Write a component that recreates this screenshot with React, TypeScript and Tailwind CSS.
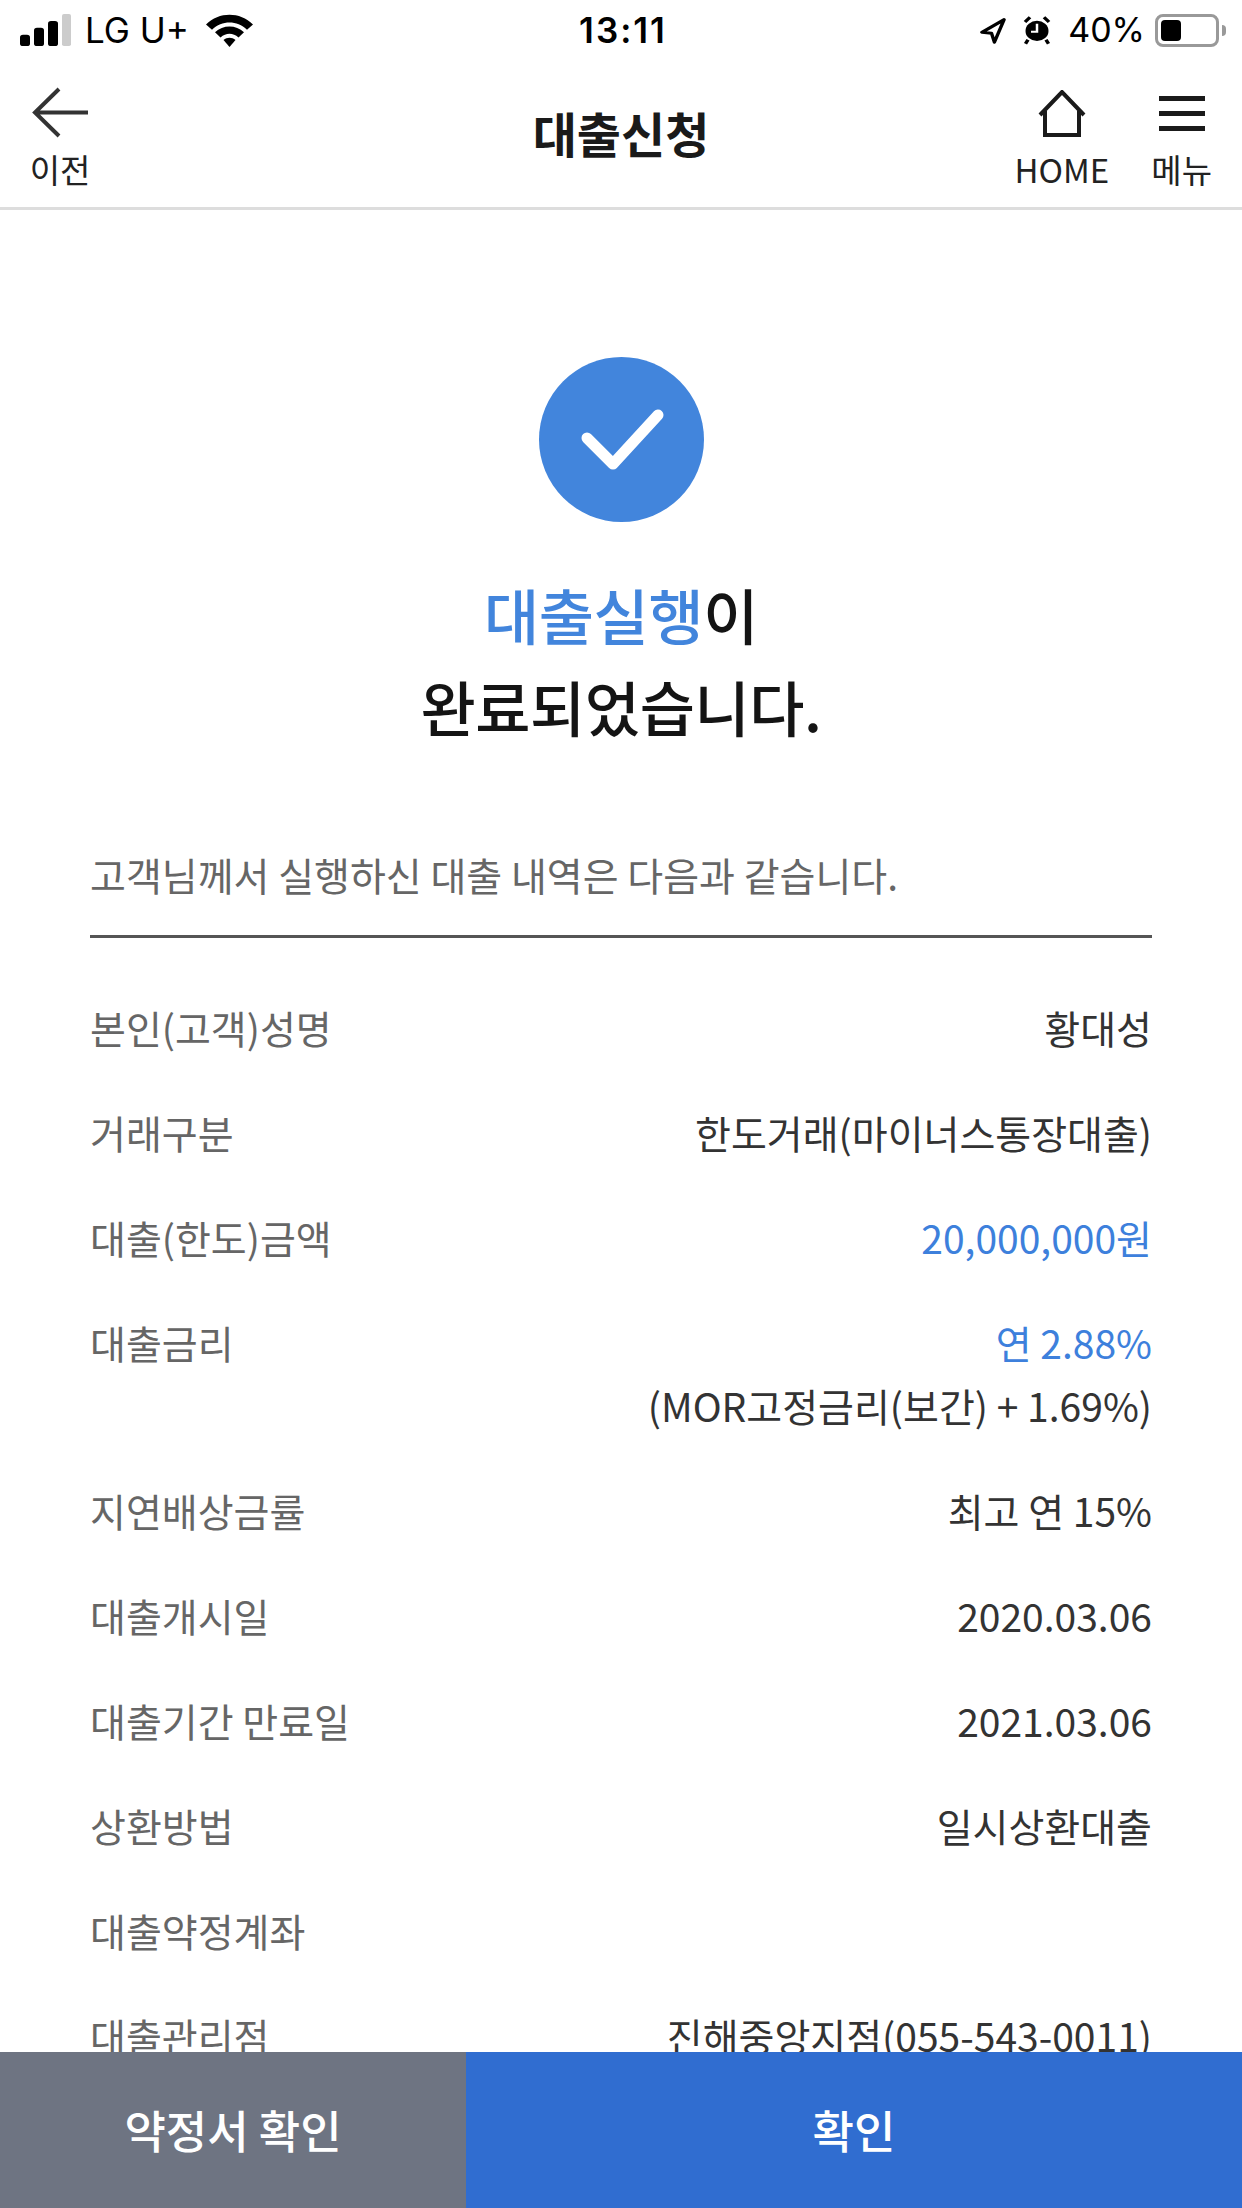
const KR = 'font-["Noto_Sans_CJK_KR",sans-serif]';

const rows = [
  { label: '본인(고객)성명', value: '황대성' },
  { label: '거래구분', value: '한도거래(마이너스통장대출)' },
  { label: '대출(한도)금액', value: '20,000,000원', blue: true },
  { label: '대출금리', value: '연 2.88%', blue: true, sub: '(MOR고정금리(보간) + 1.69%)' },
  { label: '지연배상금률', value: '최고 연 15%' },
  { label: '대출개시일', value: '2020.03.06' },
  { label: '대출기간 만료일', value: '2021.03.06' },
  { label: '상환방법', value: '일시상환대출' },
  { label: '대출약정계좌', value: '' },
  { label: '대출관리점', value: '진해중앙지점(055-543-0011)' },
];

const StatusBar = () => (
  <div className='flex h-[60px] shrink-0 items-center pl-[20px] pr-[16px] font-["Inter",sans-serif] text-[35px] text-black'>
    <div className="flex w-[400px] items-center">
      <svg width="51" height="32" viewBox="0 0 51 37" preserveAspectRatio="none" className="mr-[14px]">
        <rect x="0" y="24" width="10" height="13" rx="3" fill="#000" />
        <rect x="14" y="16" width="10" height="21" rx="3" fill="#000" />
        <rect x="28" y="8" width="10" height="29" rx="3" fill="#000" />
        <rect x="42" y="0" width="9" height="37" rx="2" fill="#ccc" />
      </svg>
      <span className="leading-none">LG U+</span>
      <svg width="47" height="33" viewBox="0 0 47 38" preserveAspectRatio="none" className="ml-[17px]">
        <path d="M0 12 C13 -3 34 -3 47 12 L41 18 C31 7 16 7 6 18 Z" fill="#000" />
        <path d="M9 21 C17 12 30 12 38 21 L32.500 27 C27 21.500 20 21.500 14.500 27 Z" fill="#000" />
        <path d="M17.500 30 C21 26.500 26 26.500 29.500 30 L23.500 38 Z" fill="#000" />
      </svg>
    </div>
    <span className="flex-1 text-center text-[35px] leading-none font-semibold tracking-[2px]">13:11</span>
    <div className="flex w-[400px] items-center justify-end text-[34px]">
      <svg width="27" height="27" viewBox="0 0 28 30" preserveAspectRatio="none" className="mr-[17px]">
        <path d="M26 3 L3 17 L13 18 L16 28 Z" fill="none" stroke="#000" strokeWidth="3.500" strokeLinejoin="round" />
      </svg>
      <svg width="28" height="30" viewBox="0 0 28 34" preserveAspectRatio="none" className="mr-[17px]">
        <circle cx="14" cy="18" r="11.500" fill="#000" />
        <path d="M14 10 V19 H8" fill="none" stroke="#fff" strokeWidth="2.500" />
        <path d="M2 8 L7 2.500 M26 8 L21 2.500 M5 28 L2.500 32.500 M23 28 L25.500 32.500" stroke="#000" strokeWidth="3.500" />
      </svg>
      <span className="leading-none">40%</span>
      <div className="ml-[10px] flex h-[33px] w-[64px] items-center rounded-[8px] border-[3px] border-[#999] p-[3px]">
        <div className="h-[21px] w-[20px] rounded-[4px] bg-black" />
      </div>
      <div className="ml-[3px] h-[11px] w-[4px] rounded-r-full bg-[#999]" />
    </div>
  </div>
);

const Header = () => (
  <div className={`flex h-[150px] shrink-0 items-start border-b-[3px] border-[#dddddd] ${KR}`}>
    <div className="flex w-[400px] flex-col items-start">
      <div className="flex w-[120px] flex-col items-center pt-[27px]">
        <svg width="58" height="52" viewBox="0 0 58 52">
          <path d="M57 25.500 H4 M28 2 L4 25.500 L28 49" fill="none" stroke="#333" strokeWidth="4" />
        </svg>
        <span className="mt-[9px] text-[33px] leading-[42px] text-[#222]">이전</span>
      </div>
    </div>
    <div className="flex-1 pt-[39px] text-center text-[48px] leading-[66px] font-bold text-[#1a1a1a]">대출신청</div>
    <div className="flex w-[400px] items-start justify-end pr-[30px]">
      <div className="flex flex-col items-center pt-[30px]">
        <svg width="48" height="50" viewBox="0 0 48 50">
          <path d="M2 25 L24 2 L46 25 M7 21 V45 H41 V21" fill="none" stroke="#1a1a1a" strokeWidth="4" />
        </svg>
        <span className="mt-[8px] text-[33px] leading-[42px] text-[#222]">HOME</span>
      </div>
      <div className="ml-[42px] flex flex-col items-center pt-[36px]">
        <svg width="46" height="44" viewBox="0 0 46 44">
          <path d="M0 2.500 H46 M0 17.500 H46 M0 32.500 H46" stroke="#1a1a1a" strokeWidth="5" />
        </svg>
        <span className="mt-[8px] text-[33px] leading-[42px] text-[#222]">메뉴</span>
      </div>
    </div>
  </div>
);

export default function App() {
  return (
    <div className={`flex h-[2208px] w-[1242px] flex-col overflow-hidden bg-white ${KR}`}>
      <StatusBar />
      <Header />
      <div className="min-h-0 flex-1 overflow-hidden px-[90px] pt-[147px]">
        <div className="flex flex-col items-center">
          <div className="flex h-[165px] w-[165px] items-center justify-center rounded-full bg-[#4285dc]">
            <svg width="88" height="66" viewBox="0 0 88 66">
              <path d="M10 31 L36 57 L81 8" fill="none" stroke="#fff" strokeWidth="11" strokeLinecap="round" strokeLinejoin="round" />
            </svg>
          </div>
          <div className="mt-[46px] text-center text-[60px] leading-[92px] font-medium tracking-[-0.4px] text-[#141414]">
            <span className="text-[#4285dc]">대출실행</span>이
            <br />
            완료되었습니다.
          </div>
        </div>
        <div className="mt-[95px] border-b-[3px] border-[#555] pb-[34px] text-[39px] leading-[54px] text-[#666]">
          고객님께서 실행하신 대출 내역은 다음과 같습니다.
        </div>
        <div className="mt-[59px] flex flex-col">
          {rows.map((row) => (
            <div key={row.label} className="flex justify-between pb-[45px] text-[39px] leading-[60px]">
              <span className="text-[#666]">{row.label}</span>
              <div className="text-right text-[#333]">
                <div className={row.blue ? 'text-[#3d80dc]' : ''}>{row.value}</div>
                {row.sub && <div className="mt-[3px]">{row.sub}</div>}
              </div>
            </div>
          ))}
        </div>
      </div>
      <div className="flex h-[156px] shrink-0 text-[45px] font-medium text-white">
        <div className="flex w-[466px] items-center justify-center bg-[#6e7482]">약정서 확인</div>
        <div className="flex flex-1 items-center justify-center bg-[#306dd0]">확인</div>
      </div>
    </div>
  );
}
